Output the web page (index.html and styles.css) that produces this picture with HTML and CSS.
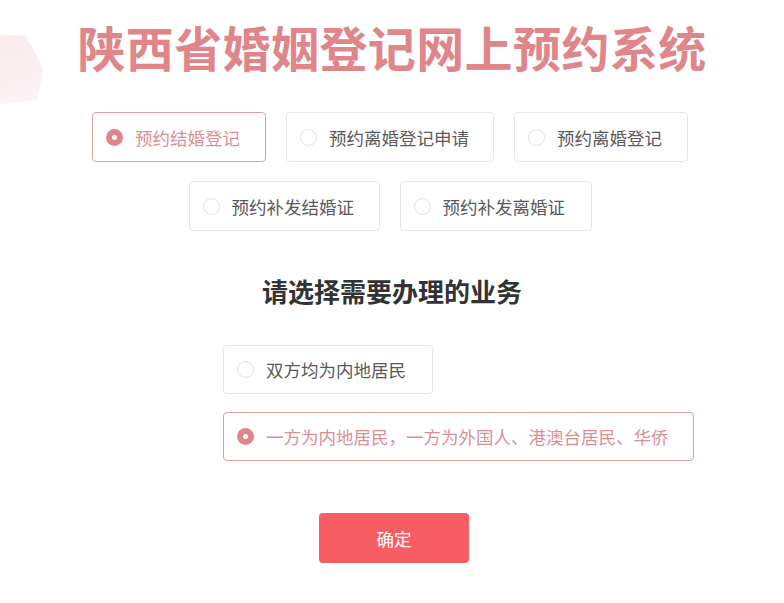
FILE: index.html
```html
<!DOCTYPE html>
<html lang="zh-CN">
<head>
<meta charset="utf-8">
<title>陕西省婚姻登记网上预约系统</title>
<link rel="stylesheet" href="styles.css">
</head>
<body>
<div class="page">
  <div class="blob"></div>
  <h1 class="title">陕西省婚姻登记网上预约系统</h1>

  <div class="types">
    <div class="row">
      <div class="opt w174 selected"><span class="radio"></span><span class="label">预约结婚登记</span></div>
      <div class="opt w208"><span class="radio"></span><span class="label">预约离婚登记申请</span></div>
      <div class="opt w174"><span class="radio"></span><span class="label">预约离婚登记</span></div>
    </div>
    <div class="row">
      <div class="opt w191"><span class="radio"></span><span class="label">预约补发结婚证</span></div>
      <div class="opt w192"><span class="radio"></span><span class="label">预约补发离婚证</span></div>
    </div>
  </div>

  <h2 class="subtitle">请选择需要办理的业务</h2>

  <div class="biz">
    <div class="opt w210"><span class="radio"></span><span class="label">双方均为内地居民</span></div>
    <div class="opt w471 selected"><span class="radio"></span><span class="label">一方为内地居民，一方为外国人、港澳台居民、华侨</span></div>
  </div>

  <div class="actions">
    <button class="confirm">确定</button>
  </div>
</div>
</body>
</html>
```
FILE: styles.css
```css
html, body {
  margin: 0;
  padding: 0;
  background: #ffffff;
}
body {
  font-family: "Noto Sans CJK SC", "Noto Sans", sans-serif;
  color: #555555;
}
.page {
  position: relative;
  width: 784px;
  height: 603px;
  overflow: hidden;
  display: flex;
  flex-direction: column;
  align-items: center;
}
.blob {
  position: absolute;
  left: -28px;
  top: 34px;
  width: 72px;
  height: 72px;
  background: linear-gradient(160deg, #fae6e9 0%, #f8ecee 60%, #fcf5f6 100%);
  clip-path: polygon(25% 0%, 75% 2%, 100% 50%, 90% 92%, 20% 100%, 0% 40%);
  filter: blur(2px);
  opacity: 0.85;
}
.title {
  margin: 22px 0 0 0;
  font-size: 48px;
  line-height: 48px;
  font-weight: 700;
  letter-spacing: 0.4px;
  color: #e08589;
  white-space: nowrap;
}
.types {
  margin-top: 42px;
  padding-right: 4px;
  display: flex;
  flex-direction: column;
  align-items: center;
  gap: 19px;
}
.row {
  display: flex;
  gap: 20px;
  justify-content: center;
}
.opt {
  box-sizing: border-box;
  height: 50px;
  display: flex;
  align-items: center;
  padding-left: 13px;
  border: 1px solid #e6e6e6;
  border-radius: 4px;
  background: #ffffff;
  font-size: 17.5px;
  color: #5a5a5a;
  white-space: nowrap;
}
.w174 { width: 174px; }
.w208 { width: 208px; }
.w191 { width: 191px; }
.w192 { width: 192px; }
.w210 { width: 210px; }
.w471 { width: 471px; }
.radio {
  box-sizing: border-box;
  width: 17px;
  height: 17px;
  border-radius: 50%;
  border: 1px solid #e0e0e0;
  background: #ffffff;
  flex: none;
  margin-right: 12px;
}
.opt.selected {
  border-color: #d9a3a6;
  color: #dc8f93;
}
.opt.selected .radio {
  border: 6px solid #e0858a;
  background: #ffffff;
}
.subtitle {
  margin: 46px 0 0 0;
  font-size: 26px;
  line-height: 28px;
  font-weight: 700;
  color: #333333;
}
.biz {
  align-self: flex-start;
  margin: 40px 0 0 223px;
  display: flex;
  flex-direction: column;
  align-items: flex-start;
  gap: 18px;
}
.biz .opt {
  height: 49px;
}
.actions {
  margin-top: 52px;
  padding-left: 4px;
}
.confirm {
  width: 150px;
  height: 50px;
  border: none;
  border-radius: 4px;
  background: #f85d64;
  color: #ffffff;
  font-family: "Noto Sans CJK SC", "Noto Sans", sans-serif;
  font-size: 17.5px;
  cursor: pointer;
}
```
